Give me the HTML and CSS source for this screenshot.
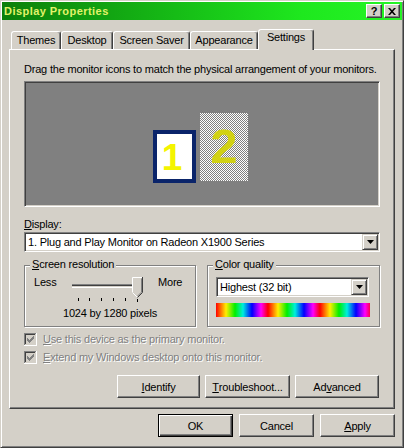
FILE: index.html
```html
<!DOCTYPE html>
<html>
<head>
<meta charset="utf-8">
<title>Display Properties</title>
<link rel="stylesheet" href="styles.css">
</head>
<body>
<div class="window">
  <div class="titlebar">
    <span class="title">Display Properties</span>
    <div class="caption-btns">
      <span class="cbtn">?</span>
      <span class="cbtn"><svg width="8" height="7" viewBox="0 0 8 7"><path d="M0 0h2l2 2.2L6 0h2L5 3.5 8 7H6L4 4.8 2 7H0l3-3.5z" fill="#000"/></svg></span>
    </div>
  </div>
  <div class="client">
    <div class="tabs">
      <div class="tab tab-themes">Themes</div>
      <div class="tab tab-desktop">Desktop</div>
      <div class="tab tab-saver">Screen Saver</div>
      <div class="tab tab-appearance">Appearance</div>
      <div class="tab tab-settings active">Settings</div>
    </div>
    <div class="panel">
      <p class="hint">Drag the monitor icons to match the physical arrangement of your monitors.</p>
      <div class="monitors">
        <div class="mon mon1">1</div>
        <div class="mon mon2">2</div>
      </div>
      <div class="lbl"><u>D</u>isplay:</div>
      <div class="combo">
        <span class="combo-text">1. Plug and Play Monitor on Radeon X1900 Series</span>
        <span class="combo-btn"><svg width="7" height="4" viewBox="0 0 7 4"><path d="M0 0h7L3.5 4z" fill="#000"/></svg></span>
      </div>
      <div class="groups">
        <div class="group group-res">
          <span class="legend"><u>S</u>creen resolution</span>
          <div class="slider-row">
            <span class="less">Less</span>
            <svg class="slider" width="76" height="26" viewBox="0 0 76 26">
              <rect x="0" y="7" width="62" height="1" fill="#808080"/>
              <rect x="0" y="8" width="62" height="1" fill="#404040"/>
              <rect x="0" y="10" width="62" height="1" fill="#fff"/>
              <rect x="1" y="9" width="61" height="1" fill="#d4d0c8"/>
              <path d="M60 0h11v15l-5.5 5.5L60 15z" fill="#d4d0c8"/>
              <path d="M60.5 15V0.5H70" stroke="#fff" fill="none"/>
              <path d="M60.5 15.5l5 5" stroke="#fff" fill="none"/>
              <path d="M70.5 0v15.5l-5 5" stroke="#404040" fill="none"/>
              <path d="M69.5 1.5v13.6l-4 4" stroke="#808080" fill="none"/>
              <rect x="6" y="21" width="1" height="3" fill="#000"/>
              <rect x="17" y="21" width="1" height="3" fill="#000"/>
              <rect x="29" y="21" width="1" height="3" fill="#000"/>
              <rect x="41" y="21" width="1" height="3" fill="#000"/>
              <rect x="53" y="21" width="1" height="3" fill="#000"/>
              <rect x="65" y="22" width="1" height="3" fill="#000"/>
            </svg>
            <span class="more">More</span>
          </div>
          <div class="res-text">1024 by 1280 pixels</div>
        </div>
        <div class="group group-color">
          <span class="legend"><u>C</u>olor quality</span>
          <div class="combo combo-small">
            <span class="combo-text">Highest (32 bit)</span>
            <span class="combo-btn"><svg width="7" height="4" viewBox="0 0 7 4"><path d="M0 0h7L3.5 4z" fill="#000"/></svg></span>
          </div>
          <div class="colorbar"></div>
        </div>
      </div>
      <div class="checks">
        <div class="check">
          <svg width="13" height="13" viewBox="0 0 13 13"><rect width="13" height="13" fill="#fff"/><rect width="12" height="12" fill="#808080"/><rect x="1" y="1" width="11" height="11" fill="#d4d0c8"/><rect x="1" y="1" width="10" height="10" fill="#404040"/><rect x="2" y="2" width="9" height="9" fill="#d4d0c8"/><path d="M3 5h1v3H3zM4 6h1v3H4zM5 7h1v3H5zM6 6h1v3H6zM7 5h1v3H7zM8 4h1v3H8zM9 3h1v3H9z" fill="#808080"/></svg>
          <span class="dis"><u>U</u>se this device as the primary monitor.</span>
        </div>
        <div class="check">
          <svg width="13" height="13" viewBox="0 0 13 13"><rect width="13" height="13" fill="#fff"/><rect width="12" height="12" fill="#808080"/><rect x="1" y="1" width="11" height="11" fill="#d4d0c8"/><rect x="1" y="1" width="10" height="10" fill="#404040"/><rect x="2" y="2" width="9" height="9" fill="#d4d0c8"/><path d="M3 5h1v3H3zM4 6h1v3H4zM5 7h1v3H5zM6 6h1v3H6zM7 5h1v3H7zM8 4h1v3H8zM9 3h1v3H9z" fill="#808080"/></svg>
          <span class="dis"><u>E</u>xtend my Windows desktop onto this monitor.</span>
        </div>
      </div>
      <div class="panel-btns">
        <span class="btn btn-identify"><u>I</u>dentify</span>
        <span class="btn btn-trouble"><u>T</u>roubleshoot...</span>
        <span class="btn btn-adv">Ad<u>v</u>anced</span>
      </div>
    </div>
    <div class="dialog-btns">
      <span class="btn btn-dlg default">OK</span>
      <span class="btn btn-dlg">Cancel</span>
      <span class="btn btn-dlg"><u>A</u>pply</span>
    </div>
  </div>
</div>
</body>
</html>
```

FILE: styles.css
```css
* { box-sizing: border-box; }
html, body { margin: 0; padding: 0; background: #d4d0c8; }
body {
  width: 404px;
  height: 448px;
  overflow: hidden;
  font-family: "Liberation Sans", Arial, sans-serif;
  font-size: 11px;
  letter-spacing: -0.2px;
  color: #000;
}
u { text-decoration: underline; text-underline-offset: 1px; }

.window {
  width: 404px;
  height: 448px;
  background: #d4d0c8;
  border: 1px solid;
  border-color: #d4d0c8 #404040 #404040 #d4d0c8;
  box-shadow: inset 1px 1px #fff, inset -1px -1px #808080;
  padding: 1px;
  display: flex;
  flex-direction: column;
}

.titlebar {
  height: 18px;
  flex: none;
  background: linear-gradient(to right, #0b7f0b, #1ee81e 75%, #26f526);
  display: flex;
  align-items: center;
  justify-content: space-between;
  padding: 0 2px 0 2px;
}
.title {
  font-weight: bold;
  color: #e2f36a;
  letter-spacing: 0.45px;
  line-height: 14px;
}
.caption-btns { display: flex; gap: 2px; }
.cbtn {
  width: 16px;
  height: 14px;
  background: #d4d0c8;
  border: 1px solid;
  border-color: #fff #404040 #404040 #fff;
  box-shadow: inset -1px -1px #808080;
  display: flex;
  align-items: center;
  justify-content: center;
  font-weight: bold;
  font-size: 11px;
  letter-spacing: 0;
  line-height: 12px;
}

.client {
  flex: 1;
  padding: 9px 7px 0 7px;
  display: flex;
  flex-direction: column;
}

.tabs {
  display: flex;
  align-items: flex-end;
  height: 20px;
  padding-left: 2px;
  position: relative;
  z-index: 1;
}
.tab {
  height: 18px;
  border: 1px solid;
  border-bottom: none;
  border-color: #fff #404040 transparent #fff;
  border-radius: 3px 3px 0 0;
  box-shadow: inset -1px 0 #808080;
  text-align: center;
  line-height: 16px;
  white-space: nowrap;
  background: #d4d0c8;
}
.tab-themes { width: 50px; }
.tab-desktop { width: 52px; }
.tab-saver { width: 77px; }
.tab-appearance { width: 68px; }
.tab-settings { width: 56px; }
.tab.active {
  height: 21px;
  margin-bottom: -1px;
  line-height: 15px;
}

.panel {
  height: 360px;
  flex: none;
  border: 1px solid;
  border-color: #fff #404040 #404040 #fff;
  box-shadow: inset -1px -1px #808080;
  padding: 13px 14px 0 14px;
  display: flex;
  flex-direction: column;
}
.hint {
  margin: 0;
  line-height: 13px;
  white-space: nowrap;
}

.sunken {
  border: 1px solid;
}
.monitors {
  margin-top: 5px;
  height: 126px;
  flex: none;
  position: relative;
  background: #808080;
  border: 1px solid;
  border-color: #808080 #fff #fff #808080;
  box-shadow: inset 1px 1px #404040, inset -1px -1px #d4d0c8;
}
.mon {
  position: absolute;
  display: flex;
  align-items: center;
  justify-content: center;
  font-weight: bold;
  letter-spacing: 0;
}
.mon1 {
  left: 128px;
  top: 48px;
  width: 43px;
  height: 53px;
  border: 4px solid #0a246a;
  background: #fff;
  color: #f4f400;
  font-size: 37px;
  padding-right: 5px;
  padding-top: 2px;
}
.mon2 {
  left: 175px;
  top: 31px;
  width: 48px;
  height: 68px;
  background-color: #fff;
  background-image: conic-gradient(#808080 0 25%, #fff 0 50%, #808080 0 75%, #fff 0);
  background-size: 2px 2px;
  color: #d2d214;
  font-size: 49px;
  padding-bottom: 3px;
}

.lbl {
  margin-top: 11px;
  line-height: 13px;
}
.combo {
  margin-top: 1px;
  height: 20px;
  flex: none;
  display: flex;
  align-items: center;
  background: #fff;
  border: 1px solid;
  border-color: #808080 #fff #fff #808080;
  box-shadow: inset 1px 1px #404040, inset -1px -1px #d4d0c8;
  padding: 1px;
}
.combo-text {
  flex: 1;
  padding-left: 2px;
  line-height: 16px;
  white-space: nowrap;
}
.combo-btn {
  width: 16px;
  height: 16px;
  flex: none;
  background: #d4d0c8;
  border: 1px solid;
  border-color: #d4d0c8 #404040 #404040 #d4d0c8;
  box-shadow: inset 1px 1px #fff, inset -1px -1px #808080;
  display: flex;
  align-items: center;
  justify-content: center;
}
.combo-btn svg { display: block; }

.groups {
  margin-top: 13px;
  display: flex;
  gap: 11px;
}
.group {
  position: relative;
  height: 62px;
  border: 1px solid #808080;
  box-shadow: inset 1px 1px #fff, 1px 1px #fff;
}
.legend {
  position: absolute;
  top: -8px;
  left: 5px;
  padding: 0 2px;
  background: #d4d0c8;
  line-height: 13px;
}
.group-res {
  width: 172px;
  padding: 11px 0 0 9px;
}
.group-color {
  flex: 1;
  padding: 11px 0 0 8px;
}
.slider-row {
  display: flex;
  align-items: flex-start;
  height: 26px;
}
.less {
  width: 38px;
  line-height: 13px;
  margin-top: -1px;
}
.slider { display: block; flex: none; }
.more {
  margin-left: 10px;
  line-height: 13px;
  margin-top: -1px;
}
.res-text {
  margin-top: 4px;
  margin-left: -9px;
  text-align: center;
  line-height: 13px;
}
.combo-small {
  margin-top: 0;
  width: 153px;
}
.colorbar {
  margin-top: 6px;
  width: 154px;
  height: 14px;
  background: repeating-linear-gradient(to right,
    #ff0000 0px, #ffee00 10px, #00ee00 19px, #00eedd 27px,
    #0000ff 36px, #ff00ff 45px, #ff0000 52px);
}

.checks {
  margin-top: 6px;
  display: flex;
  flex-direction: column;
  gap: 5px;
}
.check {
  display: flex;
  align-items: center;
  height: 13px;
  gap: 6px;
}
.check svg { display: block; flex: none; }
.dis {
  color: #808080;
  text-shadow: 1px 1px #fff;
  line-height: 13px;
  white-space: nowrap;
}

.btn {
  height: 23px;
  display: flex;
  align-items: center;
  justify-content: center;
  background: #d4d0c8;
  border: 1px solid;
  border-color: #fff #404040 #404040 #fff;
  box-shadow: inset -1px -1px #808080;
  white-space: nowrap;
}
.panel-btns {
  margin-top: 11px;
  display: flex;
  justify-content: flex-end;
  gap: 5px;
  padding-right: 1px;
}
.btn-identify { width: 83px; }
.btn-trouble { width: 85px; }
.btn-adv { width: 84px; }

.dialog-btns {
  margin-top: 5px;
  display: flex;
  justify-content: flex-end;
  gap: 6px;
}
.btn-dlg { width: 75px; }
.btn.default {
  border-color: #000;
  box-shadow: inset 1px 1px #fff, inset -1px -1px #404040, inset -2px -2px #808080;
}
```
